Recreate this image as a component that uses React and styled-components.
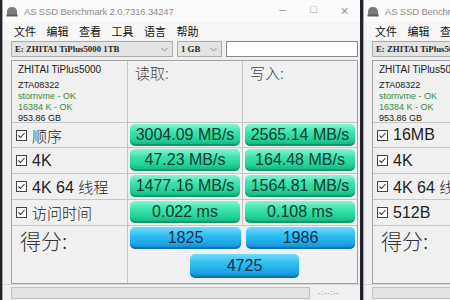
import styled, { createGlobalStyle, css } from "styled-components";

const GlobalStyle = createGlobalStyle`
  html, body {
    margin: 0;
    padding: 0;
    background: #2b2a3a;
    overflow: hidden;
  }
  * { box-sizing: border-box; }
`;

const CJK = `"Noto Sans CJK SC", "Noto Sans", sans-serif`;
const SANS = `"Liberation Sans", "Noto Sans CJK SC", sans-serif`;

const Desktop = styled.div`
  display: flex;
  gap: 3px;
  width: 450px;
  height: 300px;
  padding-left: 2px;
  background: #23222f;
`;

const Window = styled.div`
  display: flex;
  flex-direction: column;
  background: #f0f0f0;
  border-left: 1px solid #a9a9a9;
  ${(p) =>
    p.$clip
      ? css`
          flex: 1;
          min-width: 0;
          overflow: hidden;
        `
      : css`
          width: 358px;
          flex-shrink: 0;
        `}
`;

const Inner = styled.div`
  width: 357px;
  display: flex;
  flex-direction: column;
`;

// Title bar
const TitleBar = styled.div`
  height: 22px;
  display: flex;
  align-items: center;
  padding-left: 3px;
  background: #fcfcfc;
`;

const Title = styled.span`
  margin-left: 6px;
  font-family: ${SANS};
  font-size: 9.5px;
  letter-spacing: -0.15px;
  color: #8c8c8c;
  white-space: nowrap;
`;

const Controls = styled.div`
  margin-left: auto;
  display: flex;
`;

const Control = styled.span`
  width: 31px;
  text-align: center;
  font-family: ${SANS};
  font-size: ${(p) => p.$size || 12}px;
  color: #9a9a9a;
`;

// Menu
const MenuBar = styled.div`
  height: 18px;
  display: flex;
  align-items: center;
  gap: 10.5px;
  padding-left: 11px;
  background: #f7f7f7;
`;

const MenuItem = styled.span`
  font-family: ${CJK};
  font-size: 11px;
  color: #111;
  white-space: nowrap;
`;

// Toolbar with drive selector
const Toolbar = styled.div`
  height: 18px;
  display: flex;
  align-items: center;
  gap: 4px;
  padding-left: 8px;
`;

const Combo = styled.div`
  width: ${(p) => p.$w}px;
  height: 16px;
  flex-shrink: 0;
  display: flex;
  align-items: center;
  justify-content: space-between;
  padding: 0 4px 0 3px;
  background: #e3e3e3;
  border: 1px solid #adadad;
  font-family: "Liberation Serif", serif;
  font-size: 8.8px;
  font-weight: 700;
  color: #2a2a2a;
  white-space: nowrap;
`;

const TextBox = styled.div`
  width: 132px;
  height: 16px;
  flex-shrink: 0;
  background: #fff;
  border: 1px solid #8a8a8a;
`;

// Result table
const Table = styled.div`
  margin: 2px 0 0 8px;
  width: 347px;
  display: grid;
  grid-template-columns: 116px 115px 114px;
  grid-template-rows: 62px 25px 26px 26px 26px 57px;
  border: 1px solid #a3a3a3;
  background: #f0f0f0;
`;

const Cell = styled.div`
  border-right: 1px solid #c6c6c6;
  border-bottom: 1px solid #c6c6c6;
  min-width: 0;
  overflow: hidden;
  ${(p) => p.$last && css`border-right: none;`}
  ${(p) => p.$bottom && css`border-bottom: none;`}
`;

const Info = styled(Cell)`
  padding: 3px 6px;
  display: flex;
  flex-direction: column;
  font-family: ${SANS};
  font-size: 9px;
  line-height: 11px;
  color: #222;
  white-space: nowrap;
`;

const InfoName = styled.span`
  font-size: 10px;
  line-height: 12px;
  margin-bottom: 4px;
`;

const InfoLine = styled.span`
  color: ${(p) => (p.$ok ? "#3b8b3b" : "#222")};
`;

const Head = styled(Cell)`
  padding: 1px 7px;
  font-family: ${CJK};
  font-size: 15px;
  font-weight: 300;
  color: #444;
`;

const Label = styled(Cell)`
  display: flex;
  align-items: center;
  gap: 5px;
  padding-left: 4px;
  font-family: ${SANS};
  font-size: 16px;
  color: #222;
  white-space: nowrap;
`;

const Cjk = styled.span`
  font-family: ${CJK};
  font-weight: 300;
  font-size: 15px;
`;

const BarCell = styled(Cell)`
  padding: 1px 2px 2px 2px;
  display: flex;
`;

const tones = {
  green: css`
    background: linear-gradient(#84f6d6 0%, #3fe3ad 35%, #22d49a 70%, #14ad7c 100%);
    color: #113c2e;
    box-shadow: inset 0 -2px 0 rgba(0, 110, 70, 0.35);
  `,
  blue: css`
    background: linear-gradient(#6fdcfc 0%, #2fbcf0 40%, #1ca6e6 75%, #1283c4 100%);
    color: #0d2f50;
    box-shadow: inset 0 -2px 0 rgba(0, 70, 130, 0.35);
  `,
};

const Bar = styled.div`
  flex: 1;
  height: ${(p) => p.$h || 22}px;
  border-radius: 5px;
  display: flex;
  align-items: center;
  justify-content: center;
  font-family: ${SANS};
  font-size: 16px;
  white-space: nowrap;
  ${(p) => tones[p.$tone]}
`;

const ScoreLabel = styled(Cell)`
  padding: 0 8px;
  font-family: ${CJK};
  font-size: 21px;
  line-height: 28px;
  font-weight: 300;
  color: #333;
`;

const ScoreArea = styled.div`
  grid-column: 2 / span 2;
  padding: 1px 2px 0 2px;
  display: grid;
  grid-template-columns: 111px 109px;
  grid-template-rows: 22px 24px;
  column-gap: 5px;
  row-gap: 5px;
`;

const TotalBar = styled(Bar)`
  grid-column: 1 / span 2;
  justify-self: center;
  width: 109px;
  margin-left: 4px;
`;

// Status bar
const StatusBar = styled.div`
  height: 15px;
  display: flex;
  align-items: center;
  gap: 8px;
  padding: 1px 0 0 8px;
  border-top: 1px solid #d8d8d8;
`;

const Progress = styled.div`
  width: 299px;
  height: 12px;
  background: #e4e4e4;
  border: 1px solid #c2c2c2;
`;

const Time = styled.span`
  font-family: ${SANS};
  font-size: 8px;
  color: #8a8a8a;
  letter-spacing: 0.5px;
`;

function AppIcon() {
  return (
    <svg width="12" height="11" viewBox="0 0 12 11">
      <path d="M1 10 L1 6 Q1 1 6 1 Q11 1 11 6 L11 10 Z" fill="#7d7d7d" />
      <rect x="0.5" y="8.5" width="11" height="2" fill="#5f5f5f" />
    </svg>
  );
}

function Check() {
  return (
    <svg width="11" height="11" viewBox="0 0 11 11">
      <rect x="0.5" y="0.5" width="10" height="10" fill="#fff" stroke="#444" />
      <path d="M2.5 5.5 L4.5 7.5 L8.5 3" fill="none" stroke="#333" strokeWidth="1.1" />
    </svg>
  );
}

function Chevron() {
  return (
    <svg width="7" height="5" viewBox="0 0 7 5">
      <path d="M0.5 1 L3.5 4 L6.5 1" fill="none" stroke="#888" strokeWidth="0.9" />
    </svg>
  );
}

const menu = ["文件", "编辑", "查看", "工具", "语言", "帮助"];

const results = [
  { label: ["", "顺序"], read: "3004.09 MB/s", write: "2565.14 MB/s" },
  { label: ["4K", ""], read: "47.23 MB/s", write: "164.48 MB/s" },
  { label: ["4K 64 ", "线程"], read: "1477.16 MB/s", write: "1564.81 MB/s" },
  { label: ["", "访问时间"], read: "0.022 ms", write: "0.108 ms" },
];

const altLabels = [["16MB", ""], ["4K", ""], ["4K 64 ", "线程"], ["512B", ""]];

function Benchmark({ labels }) {
  return (
    <Inner>
      <TitleBar>
        <AppIcon />
        <Title>AS SSD Benchmark 2.0.7316.34247</Title>
        <Controls>
          <Control>–</Control>
          <Control $size={11}>□</Control>
          <Control $size={14}>×</Control>
        </Controls>
      </TitleBar>
      <MenuBar>
        {menu.map((m) => (
          <MenuItem key={m}>{m}</MenuItem>
        ))}
      </MenuBar>
      <Toolbar>
        <Combo $w={162}>
          E: ZHITAI TiPlus5000 1TB
          <Chevron />
        </Combo>
        <Combo $w={45}>
          1 GB
          <Chevron />
        </Combo>
        <TextBox />
      </Toolbar>
      <Table>
        <Info>
          <InfoName>ZHITAI TiPlus5000</InfoName>
          <InfoLine>ZTA08322</InfoLine>
          <InfoLine $ok>stornvme - OK</InfoLine>
          <InfoLine $ok>16384 K - OK</InfoLine>
          <InfoLine>953.86 GB</InfoLine>
        </Info>
        <Head>读取:</Head>
        <Head $last>写入:</Head>
        {results.map((r, i) => {
          const [latin, cjk] = labels ? labels[i] : r.label;
          return [
            <Label key={`l${i}`}>
              <Check />
              <span>
                {latin}
                {cjk && <Cjk>{cjk}</Cjk>}
              </span>
            </Label>,
            <BarCell key={`r${i}`}>
              <Bar $tone="green">{r.read}</Bar>
            </BarCell>,
            <BarCell key={`w${i}`} $last>
              <Bar $tone="green">{r.write}</Bar>
            </BarCell>,
          ];
        })}
        <ScoreLabel $bottom>得分:</ScoreLabel>
        <ScoreArea>
          <Bar $tone="blue">1825</Bar>
          <Bar $tone="blue">1986</Bar>
          <TotalBar $tone="blue" $h={24}>
            4725
          </TotalBar>
        </ScoreArea>
      </Table>
      <StatusBar>
        <Progress />
        <Time>-:--:--</Time>
      </StatusBar>
    </Inner>
  );
}

export default function App() {
  return (
    <>
      <GlobalStyle />
      <Desktop>
        <Window>
          <Benchmark />
        </Window>
        <Window $clip>
          <Benchmark labels={altLabels} />
        </Window>
      </Desktop>
    </>
  );
}
